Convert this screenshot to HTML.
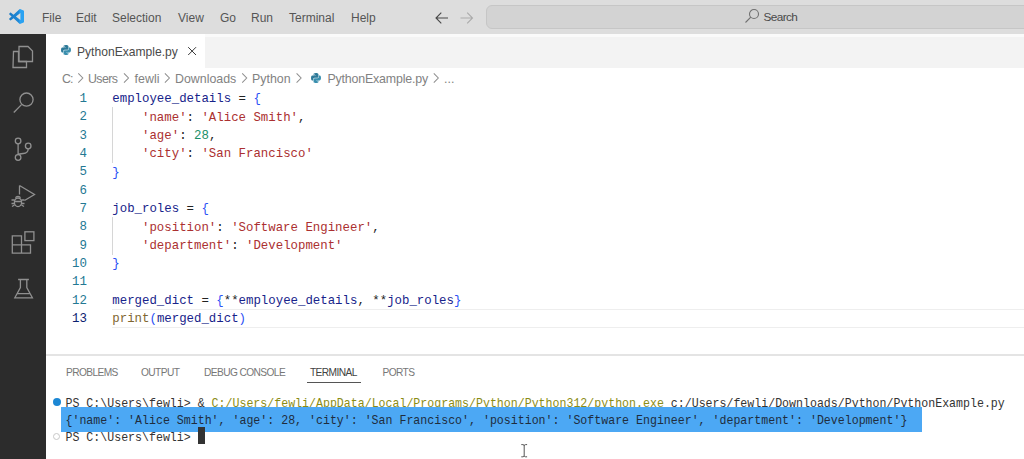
<!DOCTYPE html>
<html><head><meta charset="utf-8">
<style>
*{margin:0;padding:0;box-sizing:border-box}
html,body{width:1024px;height:459px;overflow:hidden;background:#fff}
body{position:relative;font-family:"Liberation Sans",sans-serif}
.a{position:absolute;white-space:pre}
#title{position:absolute;left:0;top:0;width:1024px;height:34px;background:#dddddd}
.menu{position:absolute;top:0.8px;height:34px;line-height:34px;font-size:12px;color:#555}
#act{position:absolute;left:0;top:34px;width:46px;height:425px;background:#2c2c2c}
#tabs{position:absolute;left:46px;top:34px;width:978px;height:34px;background:linear-gradient(#fafafa 0,#fafafa 3px,#f3f3f3 3.5px)}
#tab{position:absolute;left:46px;top:34px;width:159px;height:34px;background:#fff}
.ui{font-size:12.4px;color:#333}
.bc{font-size:12.4px;color:#828282}
.code{position:absolute;left:112.3px;margin-top:1.6px;font-family:"Liberation Mono",monospace;font-size:12.38px;line-height:18.33px;height:18.33px;color:#222}
.ln{position:absolute;left:60px;margin-top:1.2px;width:27px;text-align:right;font-family:"Liberation Mono",monospace;font-size:12.42px;line-height:18.33px;color:#237893}
.v{color:#17238a}.s{color:#ab3030}.n{color:#1a8f68}.b{color:#2a50f5}.f{color:#806630}
.term{position:absolute;left:65.5px;font-family:"Liberation Mono",monospace;font-size:11.6px;line-height:17.35px;color:#333;transform:scaleY(1.13);transform-origin:0 13px}
.ptab{position:absolute;top:365.6px;font-size:10.2px;letter-spacing:-0.6px;color:#777;line-height:14px}
</style></head><body>
<div id="title"></div>
<svg class="a" style="left:9.2px;top:9.3px" width="15.3" height="15" viewBox="0 0 100 100"><defs><linearGradient id="vg" x1="0" x2="1" y1="0" y2="0"><stop offset="0" stop-color="#1a7ac6"/><stop offset="0.65" stop-color="#1f8ad8"/><stop offset="0.72" stop-color="#2aa2f2"/><stop offset="1" stop-color="#2aa2f2"/></linearGradient></defs><path fill="url(#vg)" fill-rule="evenodd" d="M70.9 99.3c1.6.6 3.4.6 5-.2l20.6-9.9c2.1-1 3.5-3.2 3.5-5.6V16.4c0-2.4-1.4-4.6-3.5-5.6L75.9.9c-2.1-1-4.5-.8-6.4.6-.3.2-.5.4-.7.6L29.4 38 12.2 25c-1.6-1.2-3.8-1.1-5.3.2L1.4 30.3c-1.8 1.6-1.8 4.5 0 6.2L16.2 50 1.4 63.6c-1.8 1.7-1.8 4.5 0 6.2l5.5 5c1.5 1.4 3.7 1.5 5.3.2l17.2-13L68.8 97.9c.6.6 1.3 1.1 2.1 1.4zM75 27.3 45.1 50 75 72.7V27.3z"/></svg>
<div class="a menu" style="left:42px">File</div>
<div class="a menu" style="left:76px">Edit</div>
<div class="a menu" style="left:112px">Selection</div>
<div class="a menu" style="left:178px">View</div>
<div class="a menu" style="left:220px">Go</div>
<div class="a menu" style="left:251px">Run</div>
<div class="a menu" style="left:289px">Terminal</div>
<div class="a menu" style="left:351px">Help</div>
<svg class="a" style="left:434px;top:10.5px" width="16" height="14" viewBox="0 0 16 14"><path d="M14 7H2.5M7.3 1.6 2 7l5.3 5.4" fill="none" stroke="#484848" stroke-width="1.1"/></svg>
<svg class="a" style="left:459px;top:10.5px" width="16" height="14" viewBox="0 0 16 14"><path d="M1.5 7h11.5M8.2 1.6 13.5 7l-5.3 5.4" fill="none" stroke="#ababab" stroke-width="1.1"/></svg>
<div class="a" style="left:486px;top:5px;width:560px;height:23.5px;border:1.3px solid #c6c6c6;border-radius:6px;background:#d3d3d3"></div>
<svg class="a" style="left:744px;top:8px" width="16" height="16" viewBox="0 0 16 16"><circle cx="10" cy="6" r="4.5" fill="none" stroke="#707070" stroke-width="1.1"/><path d="M6.8 9.2 1.5 14.5" stroke="#707070" stroke-width="1.1"/></svg>
<div class="a ui" style="left:763.5px;top:0.3px;line-height:34px;color:#4a4a4a;font-size:11.8px;letter-spacing:-0.6px">Search</div>

<div id="act"></div>
<svg class="a" style="left:0;top:34px" width="46" height="280" viewBox="0 34 46 280" fill="none" stroke="#909090" stroke-width="1.3">
<path d="M13.5 51.5h5v10h8v6h-13.5z"/>
<path d="M19 46.5h9l4.5 4.5v10.5h-13.5z"/>
<circle cx="26.5" cy="99.6" r="6.6"/><path d="M21.5 104.6 13.8 112.5"/>
<circle cx="18.1" cy="141" r="2.8"/><circle cx="28.2" cy="146" r="2.8"/><circle cx="18.1" cy="157.5" r="2.8"/>
<path d="M18.1 143.8v10.9M28.2 148.8c0 3-2 4.5-5 4.7-3 .2-4.6 .6-5.1 1.2"/>
<path d="M19.5 185.5v9M19.5 185.5l15 9-10 6"/>
<path d="M11.5 200h3M11.5 203.5h3M12 206.5l2.5-1.5M21.5 200h3M21.5 203.5h3M24 206.5l-2.5-1.5M14.5 201.5h7M15.5 197.8c.4-1 1.3-1.5 2.5-1.5s2.1.5 2.5 1.5"/><ellipse cx="18" cy="202.3" rx="3.6" ry="4.3"/>
<path d="M12.3 235.8h9.2v9h9v8.4h-18.2zM12.3 244.8h9.2v8.4"/>
<rect x="24.9" y="231.8" width="9" height="8.8"/>
<path d="M18.1 279.5h10.8M20.4 279.5v8l-5.6 10.3h17.6l-5.6-10.3v-8M16.7 293.6h13.8"/>
</svg>

<div id="tabs"></div>
<div id="tab"></div>
<svg class="a" style="left:60.5px;top:45px" width="10" height="10" viewBox="0 0 16 16"><path fill="#2e7a99" d="M7.9 0C3.9 0 4.2 1.7 4.2 1.7v1.8H8v.5H2.6S0 3.7 0 7.9s2.3 4 2.3 4h1.3v-1.9s-.1-2.3 2.3-2.3h3.8s2.2 0 2.2-2.1V2.1S12.2 0 7.9 0zM5.8 1.2a.7.7 0 1 1 0 1.4.7.7 0 0 1 0-1.4z"/><path fill="#3a8fae" d="M8.1 16c4 0 3.7-1.7 3.7-1.7v-1.8H8V12h5.4S16 12.3 16 8.1s-2.3-4-2.3-4h-1.3V6s.1 2.3-2.3 2.3H6.3S4.1 8.3 4.1 10.4v3.5S3.8 16 8.1 16zm2.1-1.2a.7.7 0 1 1 0-1.4.7.7 0 0 1 0 1.4z"/></svg>
<div class="a ui" style="left:77px;top:34.8px;line-height:34px;font-size:12.1px;color:#4a4a4a">PythonExample.py</div>
<svg class="a" style="left:187px;top:46px" width="11" height="11" viewBox="0 0 11 11"><path d="M1.2 1.2l7.8 7.8M9 1.2l-7.8 7.8" stroke="#3a3a3a" stroke-width="1"/></svg>

<div class="a bc" style="left:62px;top:70px;line-height:18px;letter-spacing:-1px">C:</div>
<div class="a bc" style="left:88px;top:70px;line-height:18px;letter-spacing:-0.6px">Users</div>
<div class="a bc" style="left:134.6px;top:70px;line-height:18px">fewli</div>
<div class="a bc" style="left:175px;top:70px;line-height:18px">Downloads</div>
<div class="a bc" style="left:252px;top:70px;line-height:18px">Python</div>
<div class="a bc" style="left:327.5px;top:70px;line-height:18px;letter-spacing:-0.18px">PythonExample.py</div>
<div class="a bc" style="left:444px;top:70px;line-height:18px">...</div>
<svg class="a" style="left:0;top:68px" width="460" height="22" viewBox="0 68 460 22" fill="none" stroke="#8f8f8f" stroke-width="1.05">
<path d="M78.3 73.3l4.5 4.7-4.5 4.7M124 73.3l4.5 4.7-4.5 4.7M164.9 73.3l4.5 4.7-4.5 4.7M242.2 73.3l4.5 4.7-4.5 4.7M296.6 73.3l4.5 4.7-4.5 4.7M433.8 73.3l4.5 4.7-4.5 4.7"/>
</svg>
<svg class="a" style="left:310.8px;top:72.8px" width="10" height="10" viewBox="0 0 16 16"><path fill="#2e7a99" d="M7.9 0C3.9 0 4.2 1.7 4.2 1.7v1.8H8v.5H2.6S0 3.7 0 7.9s2.3 4 2.3 4h1.3v-1.9s-.1-2.3 2.3-2.3h3.8s2.2 0 2.2-2.1V2.1S12.2 0 7.9 0zM5.8 1.2a.7.7 0 1 1 0 1.4.7.7 0 0 1 0-1.4z"/><path fill="#3a8fae" d="M8.1 16c4 0 3.7-1.7 3.7-1.7v-1.8H8V12h5.4S16 12.3 16 8.1s-2.3-4-2.3-4h-1.3V6s.1 2.3-2.3 2.3H6.3S4.1 8.3 4.1 10.4v3.5S3.8 16 8.1 16zm2.1-1.2a.7.7 0 1 1 0-1.4.7.7 0 0 1 0 1.4z"/></svg>

<!-- editor -->
<div class="a" style="left:112px;top:107px;width:1px;height:56px;background:#d6d6d6"></div>
<div class="a" style="left:112px;top:217px;width:1px;height:38.3px;background:#d6d6d6"></div>
<div class="a" style="left:111.8px;top:309.2px;width:913px;height:18.4px;border-top:1.5px solid #eeeeee;border-bottom:1.5px solid #eeeeee"></div>

<div class="ln" style="top:88.67px">1</div>
<div class="ln" style="top:107px">2</div>
<div class="ln" style="top:125.33px">3</div>
<div class="ln" style="top:143.66px">4</div>
<div class="ln" style="top:162px">5</div>
<div class="ln" style="top:180.33px">6</div>
<div class="ln" style="top:198.66px">7</div>
<div class="ln" style="top:217px">8</div>
<div class="ln" style="top:235.33px">9</div>
<div class="ln" style="top:253.66px">10</div>
<div class="ln" style="top:272px">11</div>
<div class="ln" style="top:290.33px">12</div>
<div class="ln" style="top:308.66px;color:#0b216f">13</div>

<div class="code a" style="top:88.67px"><span class="v">employee_details</span> = <span class="b">{</span></div>
<div class="code a" style="top:107px">    <span class="s">'name'</span>: <span class="s">'Alice Smith'</span>,</div>
<div class="code a" style="top:125.33px">    <span class="s">'age'</span>: <span class="n">28</span>,</div>
<div class="code a" style="top:143.66px">    <span class="s">'city'</span>: <span class="s">'San Francisco'</span></div>
<div class="code a" style="top:162px"><span class="b">}</span></div>
<div class="code a" style="top:198.66px"><span class="v">job_roles</span> = <span class="b">{</span></div>
<div class="code a" style="top:217px">    <span class="s">'position'</span>: <span class="s">'Software Engineer'</span>,</div>
<div class="code a" style="top:235.33px">    <span class="s">'department'</span>: <span class="s">'Development'</span></div>
<div class="code a" style="top:253.66px"><span class="b">}</span></div>
<div class="code a" style="top:290.33px"><span class="v">merged_dict</span> = <span class="b">{</span>**<span class="v">employee_details</span>, **<span class="v">job_roles</span><span class="b">}</span></div>
<div class="code a" style="top:308.66px"><span class="f">print</span><span class="b">(</span><span class="v">merged_dict</span><span class="b">)</span></div>

<!-- panel -->
<div class="a" style="left:46px;top:354.3px;width:978px;height:1.4px;background:#e4e4e4"></div>
<div class="a ptab" style="left:66px">PROBLEMS</div>
<div class="a ptab" style="left:141px">OUTPUT</div>
<div class="a ptab" style="left:204px">DEBUG CONSOLE</div>
<div class="a ptab" style="left:310px;color:#424242">TERMINAL</div>
<div class="a ptab" style="left:382.5px">PORTS</div>
<div class="a" style="left:307px;top:382px;width:54px;height:1.2px;background:#555"></div>

<div class="a" style="left:53px;top:398px;width:8px;height:8px;border-radius:50%;background:#1c87d4"></div>
<div class="a" style="left:53px;top:433px;width:7.2px;height:7.2px;border-radius:50%;border:1.2px solid #c8c8c8"></div>
<div class="term a" style="top:394.8px">PS C:\Users\fewli&gt; &amp; <span style="color:#8a8c14">C:/Users/fewli/AppData/Local/Programs/Python/Python312/python.exe</span> c:/Users/fewli/Downloads/Python/PythonExample.py</div>
<div class="a" style="left:61px;top:406.8px;width:861px;height:24.8px;background:#4ca8f4"></div>
<div class="term a" style="top:412.2px;color:#1f2d3d">{'name': 'Alice Smith', 'age': 28, 'city': 'San Francisco', 'position': 'Software Engineer', 'department': 'Development'}</div>
<div class="term a" style="top:428.9px">PS C:\Users\fewli&gt; </div>
<div class="a" style="left:198px;top:427px;width:7px;height:17px;background:#333"></div>
<!-- mouse I-beam -->
<svg class="a" style="left:520px;top:443px" width="9" height="15" viewBox="0 0 9 15"><path d="M1.3 1.6h1.6c.8 0 1.3.4 1.3 1.2v9.8c0 .8.5 1.2 1.3 1.2h1.6M7.1 1.6H5.5c-.8 0-1.3.4-1.3 1.2M4.2 12.6c0 .8-.5 1.2-1.3 1.2H1.3" stroke="#555" stroke-width="1" fill="none"/></svg>

</body></html>
